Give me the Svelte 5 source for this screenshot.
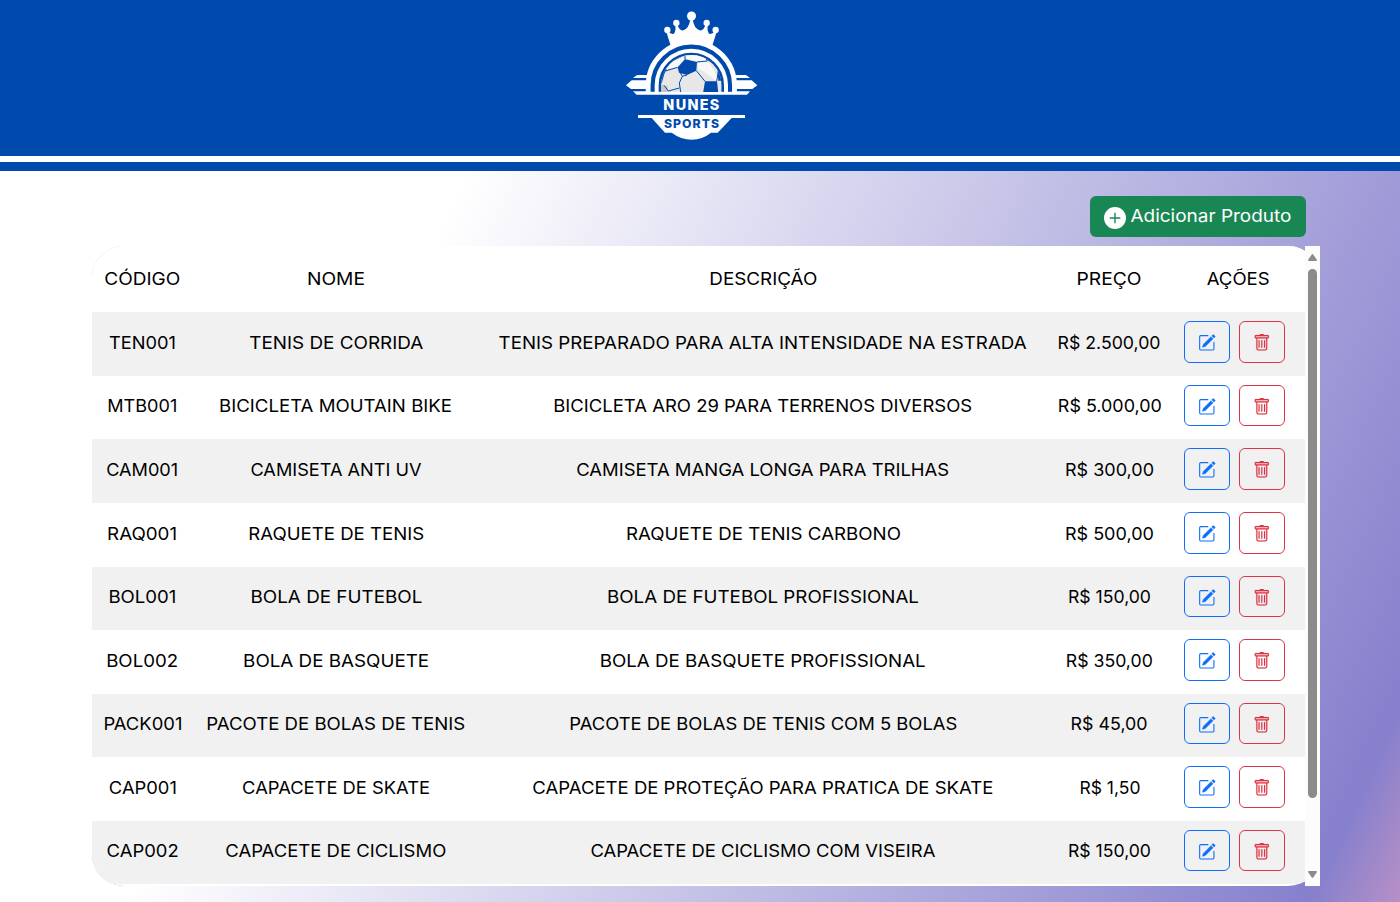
<script>
  const rows = [
    [['TEN001', 66], ['TENIS DE CORRIDA', 173], ['TENIS PREPARADO PARA ALTA INTENSIDADE NA ESTRADA', 527], ['R$ 2.500,00', 102]],
    [['MTB001', 69], ['BICICLETA MOUTAIN BIKE', 232], ['BICICLETA ARO 29 PARA TERRENOS DIVERSOS', 418], ['R$ 5.000,00', 103]],
    [['CAM001', 71], ['CAMISETA ANTI UV', 170], ['CAMISETA MANGA LONGA PARA TRILHAS', 372], ['R$ 300,00', 88]],
    [['RAQ001', 69], ['RAQUETE DE TENIS', 175], ['RAQUETE DE TENIS CARBONO', 274], ['R$ 500,00', 88]],
    [['BOL001', 67], ['BOLA DE FUTEBOL', 171], ['BOLA DE FUTEBOL PROFISSIONAL', 311], ['R$ 150,00', 82]],
    [['BOL002', 71], ['BOLA DE BASQUETE', 185], ['BOLA DE BASQUETE PROFISSIONAL', 325], ['R$ 350,00', 86]],
    [['PACK001', 78], ['PACOTE DE BOLAS DE TENIS', 258], ['PACOTE DE BOLAS DE TENIS COM 5 BOLAS', 387], ['R$ 45,00', 76]],
    [['CAP001', 67], ['CAPACETE DE SKATE', 187], ['CAPACETE DE PROTEÇÃO PARA PRATICA DE SKATE', 460], ['R$ 1,50', 60]],
    [['CAP002', 71], ['CAPACETE DE CICLISMO', 220], ['CAPACETE DE CICLISMO COM VISEIRA', 344], ['R$ 150,00', 82]]
  ];
  const headings = [['CÓDIGO', 75], ['NOME', 57], ['DESCRIÇÃO', 107], ['PREÇO', 64], ['AÇÕES', 62]];

  // Widens a label's letters so that it fills the given width.
  function fit(node, width) {
    const natural = node.getBoundingClientRect().width;
    node.style.transform = `scaleX(${(width + 1) / natural})`;
  }
</script>

<header>
  <svg class="logo" width="155" height="156" viewBox="0 0 465 468" aria-label="Nunes Sports">
    <g fill="#fff">
      <circle cx="229.500" cy="48" r="13.500" />
      <circle cx="184" cy="69" r="9.500" /><circle cx="275" cy="69" r="9.500" />
      <circle cx="157" cy="90" r="9.500" /><circle cx="302" cy="90" r="9.500" />
      <path d="M154 95 168 140Q229 116 291 140L305 95 299 94Q292 104 284 102 276 98 278 76H271Q266 93 254 91 237 86 233 58H226Q222 86 205 91 193 93 188 76H181Q183 98 175 102 167 104 160 94Z" />
      <path d="M54 234 66 225H100V234ZM405 234 393 225H359V234ZM33 256 50 241H107V267H48ZM427 256 410 241H352V267H412ZM54 274H405L396 284H65Z" />
      <path d="M69 345H390V354H350L308 398H288Q262 419 230 419T170 398H150L110 354H69Z" />
    </g>
    <path d="M100 275V256A129 129 0 0 1 358 256V275" fill="#004aad" />
    <path d="M99.500 276V256A129.500 129.500 0 0 1 358.500 256V276" fill="none" stroke="#fff" stroke-width="14.500" />
    <path d="M125 276V256A104 104 0 0 1 333 256V276" fill="none" stroke="#fff" stroke-width="12" />
    <clipPath id="ball"><path d="M138 276V256A91 91 0 0 1 320 256V276Z" /></clipPath>
    <g clip-path="url(#ball)">
      <path d="M130 150H330V280H130Z" fill="#e7e7e7" />
      <path d="M150 208 180 164H274L277 183 246 182 210 175 188 202Z" fill="#f9f9f9" />
      <path d="M248 186 276 183Q298 204 309 244L300 241Q276 218 250 206Z" fill="#f8f8f8" />
      <path d="M137 254 158 258 160 280H137Z" fill="#c8c8c8" />
      <path d="M188 202 210 178 246 186 244 212 216 225 192 218ZM270 244H306L310 280H264ZM308 212 325 215V242H310ZM274 162 300 182 282 184 273 180ZM136 210 155 207 148 222 140 250H133ZM184 163 203 158 210 166 170 185 153 206 147 203Z" fill="#004aad" />
      <path d="M210 178V160M246 186 277 183M244 212 270 244M188 202 151 213M216 225 202 229 193 249M196 218 202 229M193 249 197 276M193 264 160 273 147 256M305 244 310 215" fill="none" stroke="#004aad" stroke-width="3" />
    </g>
    <g class="mark">
      <text x="145" y="330" fill="#fff" font-size="43" letter-spacing="4" textLength="172" lengthAdjust="spacingAndGlyphs">NUNES</text>
      <text x="147" y="384" fill="#004aad" font-size="36" letter-spacing="3" textLength="168" lengthAdjust="spacingAndGlyphs">SPORTS</text>
    </g>
  </svg>
</header>
<div class="stripe"></div>

<main>
  <div class="toolbar">
    <button class="add">
      <svg width="22" height="22" viewBox="0 0 16 16" fill="#fff"><path d="M16 8A8 8 0 1 1 0 8a8 8 0 0 1 16 0M8.500 4.500a.5.5 0 0 0-1 0v3h-3a.5.5 0 0 0 0 1h3v3a.5.5 0 0 0 1 0v-3h3a.5.5 0 0 0 0-1h-3z" /></svg>
      <span class="label"><span use:fit={160}>Adicionar Produto</span></span>
    </button>
  </div>

  <div class="panel">
    <div class="view">
      <div class="row head">
        {#each headings as [text, width]}
          <div class="cell"><span use:fit={width}>{text}</span></div>
        {/each}
      </div>
      {#each rows as row}
        <div class="row">
          {#each row as [text, width]}
            <div class="cell"><span use:fit={width}>{text}</span></div>
          {/each}
          <div class="cell actions">
            <button class="edit" aria-label="Editar">
              <svg width="17.600" height="17.600" viewBox="0 0 16 16" fill="currentColor"><path d="M15.502 1.940a.5.5 0 0 1 0 .706L14.459 3.690l-2-2L13.502.646a.5.5 0 0 1 .707 0l1.293 1.293zm-1.750 2.456-2-2L4.939 9.210a.5.5 0 0 0-.121.196l-.805 2.414a.25.25 0 0 0 .316.316l2.414-.805a.5.5 0 0 0 .196-.12l6.813-6.814z" stroke="currentColor" stroke-width=".3" /><path fill-rule="evenodd" d="M1 13.500A1.500 1.500 0 0 0 2.500 15h11a1.500 1.500 0 0 0 1.500-1.500v-6a.5.5 0 0 0-1 0v6a.5.5 0 0 1-.5.5h-11a.5.5 0 0 1-.5-.5v-11a.5.5 0 0 1 .5-.5H9a.5.5 0 0 0 0-1H2.500A1.500 1.500 0 0 0 1 2.500z" /></svg>
            </button>
            <button class="remove" aria-label="Excluir">
              <svg width="17.600" height="17.600" viewBox="0 0 16 16" fill="currentColor" stroke="currentColor" stroke-width=".15"><path d="M5.500 5.500A.5.5 0 0 1 6 6v6a.5.5 0 0 1-1 0V6a.5.5 0 0 1 .5-.5m2.500 0a.5.5 0 0 1 .5.5v6a.5.5 0 0 1-1 0V6a.5.5 0 0 1 .5-.5m3 .5a.5.5 0 0 0-1 0v6a.5.5 0 0 0 1 0z" /><path d="M14.500 3a1 1 0 0 1-1 1H13v9a2 2 0 0 1-2 2H5a2 2 0 0 1-2-2V4h-.5a1 1 0 0 1-1-1V2a1 1 0 0 1 1-1H6a1 1 0 0 1 1-1h2a1 1 0 0 1 1 1h3.500a1 1 0 0 1 1 1zM4.118 4 4 4.059V13a1 1 0 0 0 1 1h6a1 1 0 0 0 1-1V4.059L11.882 4zM2.500 3h11V2h-11z" /></svg>
            </button>
          </div>
        </div>
      {/each}
    </div>
    <div class="scrollbar">
      <svg width="9" height="7" viewBox="0 0 9 7"><path d="M3.800 .5Q4.500 -.3 5.200 .5L9 6Q9 7 8 7H1Q0 7 0 6Z" /></svg>
      <div class="thumb"></div>
      <svg width="9" height="7" viewBox="0 0 9 7"><path d="M3.800 6.500Q4.500 7.300 5.200 6.500L9 1Q9 0 8 0H1Q0 0 0 1Z" /></svg>
    </div>
  </div>
</main>

<style>
  :global(body) {
    margin: 0;
    height: 902px;
    overflow: hidden;
    background: linear-gradient(115deg, #fff 30%, #8680cd 95%, #b790c6 100%);
    font-family: Inter, 'Liberation Sans', sans-serif;
  }
  header {
    height: 156px;
    background: #004aad;
    box-sizing: border-box;
    padding-left: 615px;
  }
  .logo { display: block; }
  .mark { font-family: Inter, sans-serif; font-weight: 800; }
  .stripe {
    height: 9px;
    border-top: 6px solid #fff;
    background: #004aad;
  }
  main { padding: 25px 80px 0 92px; }
  .toolbar {
    display: flex;
    justify-content: flex-end;
    padding: 0 14px 9px 0;
  }
  button {
    box-sizing: border-box;
    display: flex;
    align-items: center;
    justify-content: center;
    font: inherit;
    padding: 0;
    background: transparent;
    border-radius: 6px;
  }
  .add {
    width: 216px;
    height: 41px;
    gap: 5px;
    padding-right: 1px;
    border: 0;
    background: #198754;
    color: #fff;
    font-size: 17.200px;
  }
  .add svg { margin-top: 3px; }
  .label {
    display: flex;
    justify-content: center;
    width: 160px;
    white-space: nowrap;
    padding-bottom: 2px;
  }
  .panel {
    display: flex;
    width: 1228px;
    height: 640px;
    background: linear-gradient(#6f9fe0, #6f9fe0) 0 0 / 40px 100% no-repeat;
    border-radius: 32px 0 0 32px;
  }
  .view {
    width: 1213px;
    overflow: hidden;
    background: #fff;
    clip-path: inset(0 -15px 0 0 round 32px);
  }
  .row {
    display: grid;
    grid-template-columns: 101px 286px 568px 125px 133px;
    height: 63.600px;
    background: #fff;
    color: #000;
    font-size: 17.200px;
    font-weight: 380;
  }
  .row:nth-child(even) { background: #f1f1f1; }
  .row.head { height: 66.150px; }
  .cell {
    display: flex;
    align-items: center;
    justify-content: center;
    white-space: nowrap;
    padding-bottom: 3.400px;
  }
  .head .cell { padding-bottom: 2px; }
  .cell.actions {
    gap: 9px;
    padding: 0 8px 4px 0;
  }
  .edit, .remove {
    width: 46px;
    height: 41.600px;
    border: 1px solid #0d6efd;
    color: #0d6efd;
    padding-top: 2px;
  }
  .remove { border-color: #dc3545; color: #dc3545; }
  .scrollbar {
    width: 15px;
    box-sizing: border-box;
    display: flex;
    flex-direction: column;
    align-items: center;
    padding: 8px 0;
    background: #fcfcfc;
    fill: #8b8b8b;
  }
  .thumb {
    width: 9px;
    height: 529px;
    margin: 8px 0 auto;
    border-radius: 5px;
    background: #8b8b8b;
  }
</style>
